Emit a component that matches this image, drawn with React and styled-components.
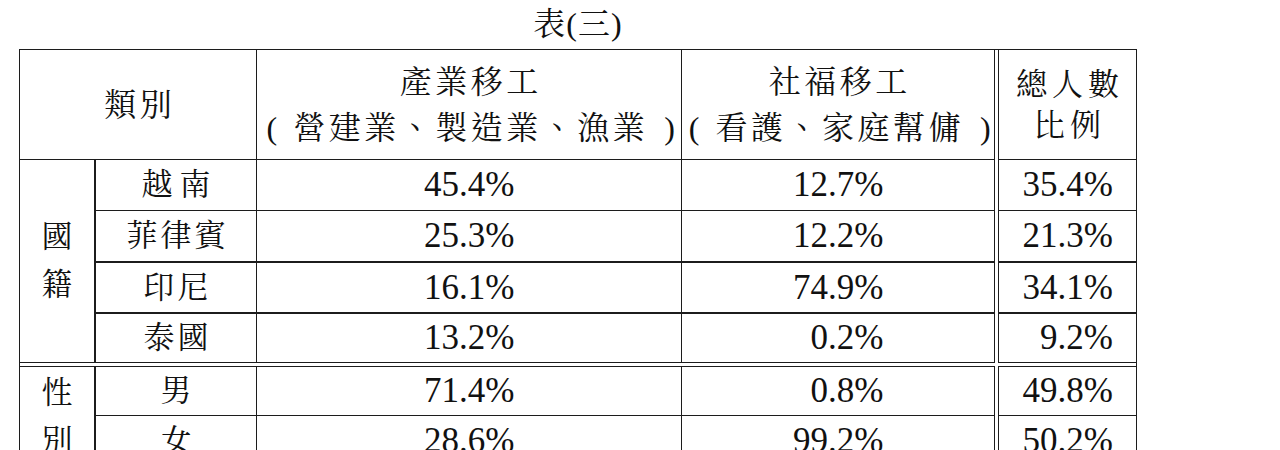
import React from "react";
import styled, { createGlobalStyle } from "styled-components";

const GlobalStyle = createGlobalStyle`
  html, body {
    margin: 0;
    padding: 0;
    background: #ffffff;
  }
  body {
    font-family: "Liberation Serif", "Noto Serif CJK TC", "AR PL UKai TW", "Noto Sans CJK TC", serif;
    color: #111111;
  }
`;

const LINE = "#1c1c1c";
const FONT = `"Liberation Serif", "Noto Serif CJK TC", "AR PL UKai TW", "Noto Sans CJK TC", serif`;

const Page = styled.div`
  width: 1118px;
  margin-left: 19px;
`;

const Title = styled.div`
  height: 49px;
  line-height: 49px;
  text-align: center;
  font-family: ${FONT};
  font-size: 32px;
  letter-spacing: 1px;
`;

const Table = styled.table`
  width: 1118px;
  table-layout: fixed;
  border-collapse: separate;
  border-spacing: 0;
  border: 1px solid ${LINE};
  font-family: ${FONT};
  color: #111111;
`;

const Row = styled.tr`
  height: ${(p) => p.$h}px;
`;

const Cell = styled.td`
  box-sizing: border-box;
  padding: 0;
  text-align: center;
  vertical-align: middle;
  border-right: ${(p) => (p.$noRight ? "none" : `${p.$rightW || 1}px solid ${LINE}`)};
  border-bottom: ${(p) => (p.$noBottom ? "none" : `${p.$bottomW || 1}px solid ${LINE}`)};
  border-top: ${(p) => (p.$top ? `1px solid ${LINE}` : "none")};
  border-left: ${(p) => (p.$left ? `1px solid ${LINE}` : "none")};
`;

const HeadCell = styled(Cell)`
  font-size: ${(p) => p.$fs || 32}px;
  line-height: ${(p) => p.$lh || 46}px;
  letter-spacing: ${(p) => p.$ls || 3.5}px;
  padding-left: ${(p) => p.$ls || 3.5}px;
  white-space: nowrap;
`;

const LabelCell = styled(Cell)`
  font-size: 31px;
  line-height: 48px;
  letter-spacing: ${(p) => p.$ls || 3}px;
  padding-left: ${(p) => p.$ls || 3}px;
`;

const GroupCell = styled(Cell)`
  font-size: 31px;
  line-height: 48px;
`;

const ValueCell = styled(Cell)`
  font-family: "Liberation Serif", "Times New Roman", serif;
  font-size: 35px;
`;

const Num = styled.span`
  display: inline-block;
  width: 2.6em;
  text-align: right;
  white-space: pre;
`;

const Paren = styled.span`
  font-family: "Liberation Serif", serif;
  letter-spacing: 0;
  white-space: pre;
`;

const Gap = styled.td`
  padding: 0;
  border: none;
`;

const groups = [
  {
    name: ["國", "籍"],
    rows: [
      { label: "越南", ls: 7, v: ["45.4%", "12.7%", "35.4%"], h: 51, b: 1 },
      { label: "菲律賓", v: ["25.3%", "12.2%", "21.3%"], h: 52, b: 2 },
      { label: "印尼", v: ["16.1%", "74.9%", "34.1%"], h: 51, b: 2 },
      { label: "泰國", v: ["13.2%", "0.2%", "9.2%"], h: 49, b: 1 },
    ],
  },
  {
    name: ["性", "別"],
    rows: [
      { label: "男", v: ["71.4%", "0.8%", "49.8%"], h: 50, b: 1, top: true },
      { label: "女", v: ["28.6%", "99.2%", "50.2%"], h: 51, b: 1 },
    ],
  },
];

function Paired({ children }) {
  return (
    <>
      <Paren>{"(  "}</Paren>
      {children}
      <Paren>{"  )"}</Paren>
    </>
  );
}

export default function App() {
  return (
    <>
      <GlobalStyle />
      <Page>
        <Title>表(三)</Title>
        <Table>
          <colgroup>
            <col style={{ width: 76 }} />
            <col style={{ width: 161 }} />
            <col style={{ width: 425 }} />
            <col style={{ width: 313 }} />
            <col style={{ width: 3 }} />
            <col style={{ width: 138 }} />
          </colgroup>
          <tbody>
            <Row $h={110}>
              <HeadCell colSpan={2}>類別</HeadCell>
              <HeadCell>
                產業移工
                <br />
                <Paired>營建業、製造業、漁業</Paired>
              </HeadCell>
              <HeadCell>
                社福移工
                <br />
                <Paired>看護、家庭幫傭</Paired>
              </HeadCell>
              <Gap />
              <HeadCell $left $noRight $lh={41} $fs={31} $ls={5}>
                總人數
                <br />
                比例
              </HeadCell>
            </Row>
            {groups.map((g, gi) => (
              <React.Fragment key={gi}>
                {gi > 0 && (
                  <Row $h={3}>
                    <Gap colSpan={6} />
                  </Row>
                )}
                {g.rows.map((r, ri) => (
                  <Row key={r.label} $h={r.h}>
                    {ri === 0 && (
                      <GroupCell
                        rowSpan={g.rows.length}
                        $rightW={2}
                        $top={r.top}
                        $noBottom={gi === groups.length - 1}
                      >
                        {g.name[0]}
                        <br />
                        {g.name[1]}
                      </GroupCell>
                    )}
                    <LabelCell $bottomW={r.b} $top={r.top} $ls={r.ls}>
                      {r.label}
                    </LabelCell>
                    <ValueCell $bottomW={r.b} $top={r.top}>
                      <Num>{r.v[0]}</Num>
                    </ValueCell>
                    <ValueCell $bottomW={r.b} $top={r.top}>
                      <Num>{r.v[1]}</Num>
                    </ValueCell>
                    <Gap />
                    <ValueCell $bottomW={r.b} $top={r.top} $left $noRight>
                      <Num>{r.v[2]}</Num>
                    </ValueCell>
                  </Row>
                ))}
              </React.Fragment>
            ))}
          </tbody>
        </Table>
      </Page>
    </>
  );
}
